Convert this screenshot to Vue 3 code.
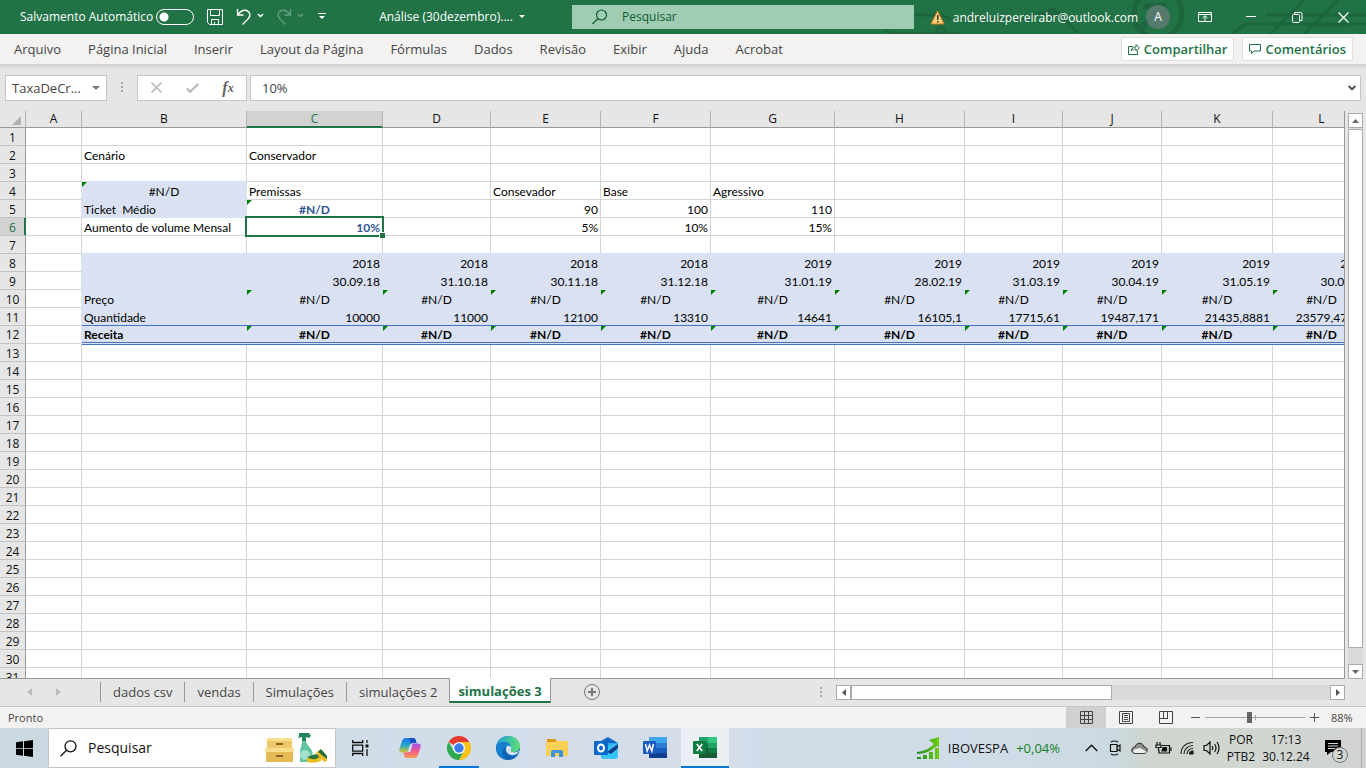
<script setup>
import { ref } from 'vue'

const menus = ['Arquivo', 'Página Inicial', 'Inserir', 'Layout da Página', 'Fórmulas', 'Dados', 'Revisão', 'Exibir', 'Ajuda', 'Acrobat']
const sheets = ['dados csv', 'vendas', 'Simulações', 'simulações 2', 'simulações 3']
const activeSheet = ref('simulações 3')
const formula = ref('10%')
const autosave = ref(false)
const zoom = ref(44)

const columns = [
  { id: 'A', w: 56 }, { id: 'B', w: 165 }, { id: 'C', w: 136 }, { id: 'D', w: 108 },
  { id: 'E', w: 110 }, { id: 'F', w: 110 }, { id: 'G', w: 124 }, { id: 'H', w: 130 },
  { id: 'I', w: 98 }, { id: 'J', w: 99 }, { id: 'K', w: 111 }, { id: 'L', w: 98 }
]
const months = 'CDEFGHIJKL'.split('')
const series = {
  8: ['2018', '2018', '2018', '2018', '2019', '2019', '2019', '2019', '2019', '2019'],
  9: ['30.09.18', '31.10.18', '30.11.18', '31.12.18', '31.01.19', '28.02.19', '31.03.19', '30.04.19', '31.05.19', '30.06.19'],
  10: Array(10).fill('#N/D'),
  11: ['10000', '11000', '12100', '13310', '14641', '16105,1', '17715,61', '19487,171', '21435,8881', '23579,47691'],
  12: Array(10).fill('#N/D')
}
const values = {
  B2: 'Cenário', C2: 'Conservador', B4: '#N/D', C4: 'Premissas', E4: 'Consevador', F4: 'Base', G4: 'Agressivo',
  B5: 'Ticket  Médio', C5: '#N/D', E5: '90', F5: '100', G5: '110',
  B6: 'Aumento de volume Mensal', C6: '10%', E6: '5%', F6: '10%', G6: '15%',
  B10: 'Preço', B11: 'Quantidade', B12: 'Receita'
}
for (const row in series) months.forEach((c, i) => { values[c + row] = series[row][i] })

const filled = (c, r) => (c === 'B' && (r === 4 || r === 5)) || (c >= 'B' && c <= 'L' && r >= 8 && r <= 12)
const nextCol = c => String.fromCharCode(c.charCodeAt(0) + 1)

function cellClass(c, r) {
  const v = values[c + r] || ''
  return {
    fill: filled(c, r),
    'fill-right': filled(c, r) || filled(nextCol(c), r),
    'fill-below': filled(c, r) || filled(c, r + 1),
    err: v === '#N/D',
    num: /^\d/.test(v),
    input: c === 'C' && (r === 5 || r === 6),
    selected: c === 'C' && r === 6,
    line: c !== 'A' && r === 11,
    total: c !== 'A' && r === 12,
    after: c !== 'A' && r === 13
  }
}
</script>

<template>
  <div class="window">
    <header class="title">
      <svg class="circuit" viewBox="0 0 520 34" width="520" height="34" fill="none" stroke="#1c6139" stroke-width="4" aria-hidden="true">
        <circle cx="312" cy="14" r="24" stroke-width="5" />
        <path d="M297 6h20v20M317 6l-22 22" stroke-width="6" />
        <path d="M68 15h28l8 4h80l8-6h20l20 20M116 34h-70l-6-3M502 25h-40M520 24h-120l-14 10M458 34l34-34M424 34l34-34M420 15h100" stroke-width="3" />
        <circle cx="206" cy="13" r="4" stroke-width="3" />
        <circle cx="95" cy="31" r="4" stroke-width="3" />
      </svg>
      <label class="autosave">Salvamento Automático
        <input v-model="autosave" type="checkbox" />
      </label>
      <div class="quick">
        <button aria-label="Salvar"><svg width="18" height="18" viewBox="0 0 18 18" fill="none" stroke="#fff"><path d="M1.500 1.500h15v15h-13l-2-2zM4.500 1.500v6h9v-6M5.500 16.500v-5h7v5M8.500 16v-2" /></svg></button>
        <button aria-label="Desfazer"><svg width="28" height="18" viewBox="0 0 28 18" fill="none" stroke="#fff"><path d="M1.500 1v6h6M1.500 7c3-4 6-5.500 9-4.500 4 1.500 4.500 5.500 1.500 8.500l-5.500 5.500" stroke-width="1.400" /><path d="M22 6l2.500 2.500L27 6" stroke-width="1.400" /></svg></button>
        <button aria-label="Refazer" class="dim"><svg width="28" height="18" viewBox="0 0 28 18" fill="none" stroke="#fff"><path d="M14.500 1v6h-6M14.500 7c-3-4-6-5.500-9-4.500-4 1.500-4.500 5.500-1.500 8.500l5.500 5.500" stroke-width="1.400" /><path d="M22 6l2.500 2.500L27 6" stroke-width="1.400" /></svg></button>
        <button aria-label="Personalizar"><svg width="8" height="8" viewBox="0 0 8 8" fill="#fff"><path d="M0 0h8v1H0zM1 3h6L4 6z" /></svg></button>
      </div>
      <button class="doc">Análise (30dezembro)....<svg width="7" height="4" viewBox="0 0 7 4" fill="#fff"><path d="M0 0h6L3 3z" /></svg></button>
      <div class="search">
        <svg width="16" height="16" viewBox="0 0 16 16" fill="none" stroke="#0f5b30" stroke-width="1.200"><circle cx="9.500" cy="6" r="5" /><path d="M6 9.500L.5 15" /></svg>
        <input type="text" placeholder="Pesquisar" aria-label="Pesquisar" />
      </div>
      <div class="account">
        <svg width="15" height="15" viewBox="0 0 15 15"><path d="M7.500 1L14 14H1z" fill="#fbd27a" stroke="#d9741c" /><path d="M7 5h1.500v5H7zM7 11h1.500v1.500H7z" fill="#333" /></svg>
        <span class="mail">andreluizpereirabr@outlook.com</span>
        <b class="avatar">A</b>
      </div>
      <div class="winbtns">
        <button aria-label="Opções da faixa"><svg width="14" height="12" viewBox="0 0 14 12" fill="none" stroke="#fff"><path d="M.5 1.500h13v9H.5zM.5 3.500h13M7 10V5M4.500 7L7 4.700 9.500 7" /></svg></button>
        <button aria-label="Minimizar"><svg width="10" height="12" viewBox="0 0 10 12" stroke="#fff"><path d="M0 5.500h10" /></svg></button>
        <button aria-label="Restaurar"><svg width="11" height="11" viewBox="0 0 11 11" fill="none" stroke="#fff"><rect x=".5" y="2.500" width="7" height="8" rx="1" /><path d="M2.500 2V.5h6q1.500 0 1.500 1.500v6.500H8" /></svg></button>
        <button aria-label="Fechar"><svg width="11" height="11" viewBox="0 0 11 11" stroke="#fff" stroke-width="1.200"><path d="M.5.5l10 10M10.500.5l-10 10" /></svg></button>
      </div>
    </header>

    <nav class="ribbon">
      <button v-for="m in menus" :key="m" class="menu">{{ m }}</button>
      <span class="grow"></span>
      <button class="action"><svg width="12" height="12" viewBox="0 0 12 12" fill="none" stroke="#217346"><path d="M5 3.500H.5v8h9V8M3 8c.5-3 2.500-4 5-4V1.500l3.500 3.500L8 8V6C6 6 4.500 6.500 3 8z" /></svg>Compartilhar</button>
      <button class="action"><svg width="12" height="12" viewBox="0 0 12 12" fill="none" stroke="#217346"><path d="M.5 1.500h11v6.500H5L2.500 10.500V8h-2z" /></svg>Comentários</button>
    </nav>

    <div class="formula">
      <button class="namebox"><span>TaxaDeCr...</span><svg width="8" height="4" viewBox="0 0 8 4" fill="#777"><path d="M0 0h8L4 4z" /></svg></button>
      <svg class="grip" width="3" height="11" viewBox="0 0 3 11" fill="#a6a6a6"><path d="M0 0h2v2H0zM0 4h2v2H0zM0 8h2v2H0z" /></svg>
      <div class="fxbox">
        <button aria-label="Cancelar"><svg width="11" height="11" viewBox="0 0 11 11" stroke="#bdbdbd" stroke-width="1.600"><path d="M.5.5l10 10M10.500.5l-10 10" /></svg></button>
        <button aria-label="Inserir"><svg width="13" height="10" viewBox="0 0 13 10" fill="none" stroke="#bdbdbd" stroke-width="2.200"><path d="M.8 5.500l3.400 3.300L12.300.8" /></svg></button>
        <button aria-label="Inserir função" class="fx">f<sub>x</sub></button>
      </div>
      <div class="entry">
        <input v-model="formula" type="text" aria-label="Barra de fórmulas" />
        <svg width="8" height="6" viewBox="0 0 8 6" fill="none" stroke="#555" stroke-width="2"><path d="M.7 1L4 4.300 7.300 1" /></svg>
      </div>
    </div>

    <main class="work">
      <div class="grid">
        <table>
          <colgroup>
            <col class="rowcol" />
            <col v-for="c in columns" :key="c.id" :style="{ width: c.w + 'px' }" />
          </colgroup>
          <thead>
            <tr>
              <th class="corner"><svg width="9" height="9" viewBox="0 0 9 9" fill="#b3b3b3"><path d="M9 0v9H0z" /></svg></th>
              <th v-for="c in columns" :key="c.id" scope="col" :class="{ on: c.id === 'C' }">{{ c.id }}</th>
            </tr>
          </thead>
          <tbody>
            <tr v-for="r in 31" :key="r">
              <th scope="row" :class="{ on: r === 6, raised: r === 12 }">{{ r }}</th>
              <td v-for="c in columns" :key="c.id" :class="cellClass(c.id, r)">{{ values[c.id + r] }}<i v-if="c.id === 'C' && r === 6" class="cursor"></i></td>
            </tr>
          </tbody>
        </table>
      </div>
      <div class="vscroll">
        <button aria-label="Rolar para cima"><svg width="7" height="4" viewBox="0 0 7 4" fill="#666"><path d="M0 4h7L3.500 0z" /></svg></button>
        <div class="thumb"></div>
        <div class="track"></div>
        <button aria-label="Rolar para baixo"><svg width="7" height="4" viewBox="0 0 7 4" fill="#666"><path d="M0 0h7L3.500 4z" /></svg></button>
      </div>
    </main>

    <div class="sheets">
      <div class="arrows">
        <button aria-label="Planilha anterior"><svg width="5" height="8" viewBox="0 0 5 8" fill="#bdbdbd"><path d="M5 0v8L0 4z" /></svg></button>
        <button aria-label="Próxima planilha"><svg width="5" height="8" viewBox="0 0 5 8" fill="#bdbdbd"><path d="M0 0v8l5-4z" /></svg></button>
      </div>
      <button v-for="s in sheets" :key="s" class="sheet" :class="{ active: s === activeSheet }" @click="activeSheet = s">{{ s }}</button>
      <button class="add" aria-label="Nova planilha"><svg width="16" height="16" viewBox="0 0 16 16" fill="none" stroke="#777"><circle cx="8" cy="8" r="7.500" /><path d="M8 4v8M4 8h8" stroke-width="2" /></svg></button>
      <span class="grow"></span>
      <svg class="grip" width="3" height="11" viewBox="0 0 3 11" fill="#a6a6a6"><path d="M0 0h2v2H0zM0 4h2v2H0zM0 8h2v2H0z" /></svg>
      <div class="hscroll">
        <button aria-label="Rolar para a esquerda"><svg width="4" height="7" viewBox="0 0 4 7" fill="#555"><path d="M4 0v7L0 3.500z" /></svg></button>
        <div class="thumb"></div>
        <div class="track"></div>
        <button aria-label="Rolar para a direita"><svg width="4" height="7" viewBox="0 0 4 7" fill="#555"><path d="M0 0v7l4-3.500z" /></svg></button>
      </div>
    </div>

    <footer class="status">
      <span>Pronto</span>
      <span class="grow"></span>
      <button class="view on" aria-label="Normal"><svg width="13" height="13" viewBox="0 0 13 13" fill="none" stroke="#444"><path d="M.5.5h12v12H.5zM4.500 0v13M8.500 0v13M0 4.500h13M0 8.500h13" /></svg></button>
      <button class="view" aria-label="Layout da Página"><svg width="14" height="13" viewBox="0 0 14 13" fill="none" stroke="#444"><path d="M.5.5h13v12H.5zM3.500 2.500h7v8h-7zM5 4.500h4M5 6.500h4M5 8.500h4" /></svg></button>
      <button class="view" aria-label="Quebra de página"><svg width="14" height="13" viewBox="0 0 14 13" fill="none" stroke="#444"><path d="M.5.5h13v12H.5zM4.500 0v7.500M8.500 0v7.500M0 7.500h9" /></svg></button>
      <button class="step" aria-label="Reduzir"><svg width="9" height="9" viewBox="0 0 9 9" stroke="#555"><path d="M0 4.500h9" /></svg></button>
      <div class="zoom"><input v-model="zoom" type="range" min="0" max="100" aria-label="Zoom" /></div>
      <button class="step" aria-label="Ampliar"><svg width="9" height="9" viewBox="0 0 9 9" stroke="#555"><path d="M0 4.500h9M4.500 0v9" /></svg></button>
      <span class="pct">88%</span>
    </footer>

    <div class="taskbar">
      <button class="start" aria-label="Iniciar"><svg width="17" height="17" viewBox="0 0 17 17" fill="#000"><path d="M0 2.300l7-1v6.900H0zM8 1.200L17 0v8.200H8zM0 9h7v6.800l-7-1zM8 9h9v8l-9-1.200z" /></svg></button>
      <div class="tsearch">
        <svg width="17" height="17" viewBox="0 0 17 17" fill="none" stroke="#111" stroke-width="1.300"><circle cx="10.500" cy="6.300" r="5.500" /><path d="M6.500 10.300L.5 16.300" /></svg>
        <input type="text" placeholder="Pesquisar" aria-label="Pesquisar no Windows" />
        <svg width="64" height="32" viewBox="0 0 64 32">
          <rect x="3" y="7" width="25" height="11" rx="1" fill="#edc868" /><rect x="3" y="6" width="25" height="3" fill="#f8dd8d" />
          <rect x="2" y="18" width="27" height="12" rx="1" fill="#e5ba55" /><rect x="1" y="16" width="29" height="4" rx="1" fill="#f8dd8d" />
          <rect x="12" y="11" width="7" height="2" fill="#8c6327" /><rect x="12" y="23" width="7" height="2" fill="#8c6327" />
          <path d="M35 1h10l2 3-2 2-3-1v4h-4V5l-4 1 1-2z" fill="#25865b" />
          <path d="M38 9h4c0 4 7 7 7 15v5q0 1-1 1H37q-1 0-1-1v-8c0-5 2-7 2-12z" fill="#62c5a0" /><circle cx="41" cy="23" r="5" fill="#a2e2cc" />
          <path d="M43 26l9-3 5 2v4q-7 3-14 1z" fill="#efbb23" /><path d="M43 25l9-3 5 2-5 3q-5 1-9-2z" fill="#2b7838" />
          <path d="M52 21l3-3 8 8v3l-3 1z" fill="#efbb23" /><path d="M54 20l3-3 6 7v3z" fill="#216f38" />
        </svg>
      </div>
      <div class="apps">
        <button aria-label="Visão de tarefas"><svg width="17" height="16" viewBox="0 0 17 16" fill="none" stroke="#111" stroke-width="1.300"><path d="M.7 0v2.500h10V0M.7 5.200h10v6H.7zM.7 16v-2.500h10V16M15 0v3M15 9v7" /><path d="M13.500 4.500h3v3h-3z" fill="#111" stroke="none" /></svg></button>
        <button aria-label="Copilot"><svg width="24" height="24" viewBox="0 0 24 24">
          <defs>
            <linearGradient id="cpA" x1="0" y1="0" x2="0" y2="1"><stop offset="0" stop-color="#1b72e8" /><stop offset=".5" stop-color="#25a7c9" /><stop offset="1" stop-color="#d9c52a" /></linearGradient>
            <linearGradient id="cpB" x1="0" y1="0" x2="0" y2="1"><stop offset="0" stop-color="#a64ff0" /><stop offset=".5" stop-color="#ef5a8e" /><stop offset="1" stop-color="#fb9a52" /></linearGradient>
          </defs>
          <path d="M8 2h7c2 0 2.500 1 3 3l.5 2H15c-2 0-2.500 1-3 3l-1 4c-.7 2-1.500 2.500-3 2.500H4c-2.500 0-3-2-2.500-4L4 5c.7-2 2-3 4-3z" fill="url(#cpA)" />
          <path d="M16 22H9c-2 0-2.500-1-3-3l-.5-2.500H9c2 0 2.500-1 3-2.500l1-4c.7-2 1.500-2.500 3-2.500h4c2.500 0 3 2 2.500 4L20 19c-.7 2-2 3-4 3z" fill="url(#cpB)" />
          <path d="M11 2h4c2 0 2.500 1 3 3l.5 2H15c-1 0-1.600.3-2 1z" fill="#1552c4" />
          <path d="M12 8.500h2.500l-2.300 7.500h-2.700z" fill="#d4dfeb" />
        </svg></button>
        <button aria-label="Chrome" class="open"><svg width="24" height="24" viewBox="0 0 24 24">
          <path d="M12 12L1.600 6A12 12 0 0 1 22.400 6z" fill="#e33b2e" /><path d="M12 12V6h10.400A12 12 0 0 1 12 24l5-9z" fill="#fbc116" /><path d="M12 12l5 3-5 9A12 12 0 0 1 1.600 6l5.200 9z" fill="#2da94f" />
          <circle cx="12" cy="12" r="6" fill="#fff" /><circle cx="12" cy="12" r="4.700" fill="#3b7ded" />
        </svg></button>
        <button aria-label="Edge"><svg width="24" height="24" viewBox="0 0 24 24">
          <defs>
            <linearGradient id="egA" x1="0" y1="0" x2="1" y2="0"><stop offset="0" stop-color="#1c9de0" /><stop offset="1" stop-color="#5fe070" /></linearGradient>
          </defs>
          <circle cx="12" cy="12" r="12" fill="#0f62b4" />
          <path d="M0 11C1 4 6 0 12 0c7 0 12 5 12 10 0 4-3 6-6 6-4 0-4-2-3.500-3C15.500 9 12 6 8 6c-4 0-7 2-8 5z" fill="url(#egA)" />
          <path d="M0 11c2-5 9-6 13-3 2 1.500 2 4 1 5.500-.5 1 0 3 4 3l5-2-2 4c-2 1-4 1.500-6 1-4-.5-6.500-4-5-9-5 2-5 10 1 13.300C5 23 0 19 0 11z" fill="#167fce" />
          <path d="M11 10c-2 3-1 8 4 9 2 .5 4 0 6-1l2.500-3.500C25 13 24 17 22 19l2-5c-2 2-4 2.500-6.500 2.300-3-.5-3-2-2.500-3.300 1-2-1-4-4-3z" fill="#d4e1ec" />
        </svg></button>
        <button aria-label="Explorador"><svg width="24" height="24" viewBox="0 0 24 24">
          <path d="M2 3h8l2 2v3H2z" fill="#dc9a07" /><path d="M2 6h8l2-1h10q1 0 1 1v14H1V7z" fill="#fccf55" /><path d="M6 21v-5q0-2 2-2h8q2 0 2 2v5h-4v-4h-4v4z" fill="#3a93dc" />
        </svg></button>
        <button aria-label="Outlook"><svg width="26" height="24" viewBox="0 0 26 24">
          <path d="M6 6l9-5 10 6v11H6z" fill="#1269c7" /><path d="M7 7h14v9H7z" fill="#29b2ef" /><path d="M8 14l17-8v14q0 3-3 3H10q-2 0-2-2z" fill="#38c4f2" /><path d="M14 16l11-8v4l-7 6z" fill="#103d87" />
          <rect x="1" y="5" width="14" height="14" rx="1" fill="#0869c9" /><ellipse cx="8" cy="12" rx="3" ry="3.500" fill="none" stroke="#fff" stroke-width="2" />
        </svg></button>
        <button aria-label="Word"><svg width="24" height="22" viewBox="0 0 24 22">
          <path d="M6 0h18v6H6z" fill="#41a5ee" /><path d="M6 6h18v5H6z" fill="#2b7cd3" /><path d="M6 11h18v5H6z" fill="#185abd" /><path d="M6 16h18v5H6z" fill="#103f91" /><rect y="4" width="13" height="13" rx="1" fill="#185abd" />
          <path d="M2.500 7l1.700 7L6.500 8l2.300 6L10.500 7" fill="none" stroke="#fff" stroke-width="1.500" />
        </svg></button>
        <button aria-label="Excel" class="current"><svg width="24" height="22" viewBox="0 0 24 22">
          <path d="M6 0h9v6H6z" fill="#21a366" /><path d="M15 0h9v6h-9z" fill="#33c481" /><path d="M6 6h9v5H6z" fill="#107c41" /><path d="M15 6h9v5h-9z" fill="#21a366" /><path d="M6 11h18v10H6z" fill="#185c37" /><path d="M15 11h9v5h-9z" fill="#107c41" /><rect y="4" width="13" height="13" rx="1" fill="#107c41" />
          <path d="M3.800 7l5.400 7M9.200 7l-5.400 7" stroke="#fff" stroke-width="1.700" />
        </svg></button>
      </div>
      <span class="grow"></span>
      <button class="stock">
        <svg width="24" height="24" viewBox="0 0 24 24"><defs><linearGradient id="stk" x1="0" y1="0" x2="1" y2="0"><stop offset="0" stop-color="#1c8a2f" /><stop offset="1" stop-color="#6fce0d" /></linearGradient></defs>
          <path d="M1 16c8-1 13-4 17-8l-5-4 10-3v10l-2-1c-6 5-12 8-20 8zM1 21h4v2H1zM7 19h4v4H7zM13 16h4v7h-4zM19 12h4v11h-4z" fill="url(#stk)" /></svg>
        <span>IBOVESPA</span><span class="up">+0,04%</span>
      </button>
      <div class="tray">
        <button aria-label="Mostrar ícones ocultos"><svg width="13" height="8" viewBox="0 0 13 8" fill="none" stroke="#111" stroke-width="1.400"><path d="M.7 7L6.500 1.200 12.300 7" /></svg></button>
        <button aria-label="Câmera"><svg width="12" height="16" viewBox="0 0 12 16" fill="none" stroke="#111" stroke-width="1.200"><path d="M1.500 4.500h6.500v7H1.500zM8 7l3-2v6L8 9M2 2q3-2 7 0M2 14q3 2 7 0" /></svg></button>
        <button aria-label="OneDrive"><svg width="17" height="12" viewBox="0 0 17 12"><path d="M4 11.300C-.5 11 0 5 4 5c1-5 8-5 9 0 4 0 4.500 6 0 6.300z" fill="#8f8f8f" stroke="#222" /><path d="M4 11C1 9.500 2 7.500 5 7l4-1 7 4-3 1z" fill="#eee" /></svg></button>
        <button aria-label="Bateria"><svg width="17" height="13" viewBox="0 0 17 13" fill="none" stroke="#111" stroke-width="1.200"><path d="M7 3.500h7.500v7.500H4V8M16 5.500v3.500M2 0v3M5 0v3M1 3h5v2.500H1zM3.500 5v4" /><path d="M8 5.500h3.500v3.500H7z" fill="#111" /></svg></button>
        <button aria-label="Rede"><svg width="14" height="14" viewBox="0 0 14 14" fill="none" stroke="#222" stroke-width="1.200"><path d="M1 13C1 6 6 1.500 13 1.500M4 13c0-5 4-8.500 9-8.500M7 13c0-3 2.500-5.500 6-5.500" /><path d="M9.500 13c0-1.500 1-3 3.500-3v3z" fill="#111" /></svg></button>
        <button aria-label="Volume"><svg width="17" height="14" viewBox="0 0 17 14" fill="none" stroke="#111" stroke-width="1.200"><path d="M1 4.500h2.500L7 1v12L3.500 9.500H1zM9 5q1.500 2 0 4M11.500 3q3 4 0 8M14 1q4 6 0 12" /></svg></button>
      </div>
      <button class="lang"><span>POR</span><span>PTB2</span></button>
      <button class="clock"><span>17:13</span><span>30.12.24</span></button>
      <button class="note" aria-label="Notificações"><svg width="16" height="16" viewBox="0 0 16 16"><path d="M0 0h16v12H6l-4 3v-3H0z" /><path d="M3 3.500h10M3 6h10M3 8.500h7" stroke="#d3d7d2" /></svg><b>3</b></button>
      <span class="edge"></span>
    </div>
  </div>
</template>

<style>
body { overflow: hidden; }
</style>

<style scoped>
.window { display: flex; flex-direction: column; height: 100vh; background: #e6e6e6; color: #444; font: 12px/16px "Open Sans", "Noto Sans", sans-serif; }
button, input { font: inherit; color: inherit; border: 0; background: none; padding: 0; margin: 0; outline: 0; }
button { display: flex; align-items: center; justify-content: center; white-space: nowrap; }
svg { flex: none; }
.grow { flex: 1; }

.title { position: relative; display: flex; align-items: center; height: 34px; flex: none; background: #217346; color: #fff; overflow: hidden; }
.title > * { position: relative; }
.title .circuit { position: absolute; right: 0; top: 0; width: 520px; opacity: .75; }
.autosave { display: flex; align-items: center; gap: 3px; width: 174px; margin-left: 20px; white-space: nowrap; }
.autosave input { appearance: none; flex: none; width: 38px; height: 16px; box-sizing: border-box; border: 1px solid #fff; border-radius: 8px; background: radial-gradient(circle at 7px 7px, #fff 4px, transparent 5px); }
.quick { display: flex; align-items: center; gap: 12px; margin-left: 12px; }
.quick .dim { opacity: .3; }
.quick button:last-child { margin-left: 2px; }
.doc { gap: 6px; width: 143px; margin-left: 55px; }
.search { display: flex; align-items: center; flex: 0 1 342px; height: 24px; margin-left: 48px; padding-left: 20px; box-sizing: border-box; gap: 14px; background: #9fcdb3; color: #0f5b30; }
.search input { flex: 1; min-width: 0; }
input::placeholder { color: inherit; opacity: 1; }
.account { display: flex; align-items: center; gap: 8px; margin-left: auto; }
.mail { padding-top: 1px; }
.avatar { width: 24px; height: 24px; line-height: 24px; border-radius: 50%; background: #56796d; text-align: center; font-weight: 400; }
.winbtns { display: flex; margin-left: 12px; }
.winbtns button { width: 46px; height: 30px; }

.ribbon { display: flex; align-items: center; flex: none; height: 30px; padding-left: 1px; background: #f3f2f1; font-size: 13px; }
.menu { padding: 0 14px 0 13px; height: 30px; }
.action { height: 24px; padding: 0 6px; gap: 4px; margin-right: 8px; box-sizing: border-box; border: 1px solid #e1dfdd; border-radius: 2px; background: #fff; color: #217346; font-weight: 600; }
.action:last-child { margin-right: 13px; }

.formula { display: flex; align-items: center; flex: none; height: 47px; padding: 0 5px; background: linear-gradient(#cfcfcf, #e6e6e6 6px); font-size: 13px; }
.namebox, .fxbox, .entry { display: flex; align-items: center; height: 26px; box-sizing: border-box; border: 1px solid #c6c6c6; background: #fff; }
.namebox { width: 102px; justify-content: space-between; padding: 0 6px; }
.grip { margin: 0 13px 0 14px; }
.fxbox { width: 110px; margin-right: 3px; }
.fxbox button { flex: 1; height: 24px; }
.fx { font: italic 700 16px/20px "Liberation Serif", serif; color: #666; }
.fx sub { font-size: 12px; line-height: 12px; }
.entry { flex: 1; padding: 0 4px 0 11px; }
.entry input { flex: 1; }

.work { display: flex; flex: 1; min-height: 0; }
.grid { flex: 1; min-width: 0; overflow: hidden; background: #fff; border-right: 1px solid #999; border-bottom: 1px solid #999; }
table { width: 1371px; table-layout: fixed; border-collapse: separate; border-spacing: 0; }
.rowcol { width: 26px; }
th, td { box-sizing: border-box; height: 18px; padding: 2px 0 0; line-height: 15px; white-space: pre; overflow: hidden; }
th { font-weight: 400; color: #111; background: #e6e6e6; border-right: 1px solid #999; border-bottom: 1px solid #c4c4c4; }
thead th { height: 17px; padding: 0; line-height: 16px; border-right-color: #b4b4b4; border-bottom-color: #999; }
.corner { text-align: right; padding-right: 4px; vertical-align: bottom; line-height: 10px; }
.corner svg { display: inline-block; vertical-align: bottom; margin-bottom: 2px; }
th.on { background: #d2d2d2; color: #217346; box-shadow: inset -1px 0 #217346; border-right-color: #217346; }
thead th.on { box-shadow: inset 0 -1px #217346; border-right-color: #b4b4b4; border-bottom-color: #217346; }
td { position: relative; padding: 2px 2px 0; font-family: Lato, "Open Sans", sans-serif; font-size: 12px; color: #000; border-right: 1px solid #d4d4d4; border-bottom: 1px solid #d4d4d4; }
.fill { background: #d9e1f2; }
.fill-right { border-right-color: #d9e1f2; }
.fill-below { border-bottom-color: #d9e1f2; }
.num { text-align: right; }
.err { text-align: center; }
.err::before { content: ""; position: absolute; left: 0; top: 0; width: 5px; height: 5px; background: #008000; clip-path: polygon(0 0, 100% 0, 0 100%); }
.input { color: #305496; font-weight: 700; }
.selected { overflow: visible; }
.cursor { position: absolute; inset: -2px; border: 2px solid #217346; z-index: 1; }
.cursor::after { content: ""; position: absolute; right: -3px; bottom: -3px; width: 5px; height: 5px; background: #217346; border: solid #fff; border-width: 1px 0 0 1px; }
.raised, .total { padding-top: 0; line-height: 17px; }
.total { font-weight: 700; }
/* Rules are painted under transparent borders so they run unbroken across columns. */
.line, .total, .after { background-origin: border-box; background-repeat: no-repeat; border-color: transparent; }
.line { background-image: linear-gradient(#4472c4, #4472c4); background-size: 100% 1px; background-position: 0 17px; }
.total { background-image: linear-gradient(#4472c4, #4472c4); background-size: 100% 1px; background-position: 0 16px; }
.after { background-image: linear-gradient(#4472c4, #4472c4), linear-gradient(#d4d4d4, #d4d4d4), linear-gradient(#d4d4d4, #d4d4d4); background-size: 100% 1px, 100% 1px, 1px 100%; background-position: 0 0, 0 100%, 100% 0; }

.vscroll { display: flex; flex-direction: column; width: 15px; flex: none; margin: 2px 3px 0 3px; background: #dadada; }
.vscroll button, .hscroll button { width: 15px; height: 15px; box-sizing: border-box; border: 1px solid #ababab; background: #fff; flex: none; }
.thumb { box-sizing: border-box; border: 1px solid #ababab; background: #fff; }
.vscroll .thumb { flex: 97; margin-top: 1px; }
.vscroll .track { flex: 3; }

.sheets { display: flex; align-items: center; flex: none; height: 28px; box-sizing: border-box; padding-bottom: 1px; border-bottom: 1px solid #c6c6c6; font-size: 13px; }
.arrows { display: flex; gap: 24px; width: 73px; padding-left: 27px; }
.sheet { height: 20px; padding: 0 12px 1px 12px; box-sizing: border-box; border-left: 1px solid #999; }
.sheet.active { align-self: flex-start; height: 25px; margin-top: -1px; padding: 2px 8px 0; background: #fff; border-left: 1px solid #999; border-right: 1px solid #999; border-bottom: 2px solid #217346; color: #217346; font-weight: 700; z-index: 1; }
.add { margin-left: 33px; }
.hscroll { display: flex; flex: 0 1 509px; height: 15px; margin-right: 21px; background: #dadada; }
.hscroll .thumb { flex: 260; }
.hscroll .track { flex: 219; }

.status { display: flex; align-items: center; flex: none; height: 21px; padding-left: 8px; background: #f3f2f1; font-size: 11px; }
.view { width: 40px; height: 21px; }
.view.on { background: #d2d0ce; }
.step { width: 19px; height: 21px; }
.zoom { width: 100px; height: 21px; display: flex; align-items: center; background: linear-gradient(#a6a6a6, #a6a6a6) 50px 8px / 1px 5px no-repeat; }
.zoom input { appearance: none; width: 100%; height: 1px; background: #a6a6a6; }
.zoom input::-webkit-slider-thumb { appearance: none; width: 5px; height: 11px; background: #666; }
.pct { width: 42px; padding-left: 7px; box-sizing: border-box; }

.taskbar { display: flex; align-items: stretch; flex: none; height: 40px; color: #111; background: linear-gradient(90deg, #cad8df, #d0dde9 25%, #d5dcea 45%, #cfdce8 75%, #cbd9e3 81%, #ced6cf 84%, #d2d6d1 92%, #d0d3d0); }
.start { width: 48px; }
.tsearch { display: flex; align-items: center; width: 288px; box-sizing: border-box; padding: 0 7px 0 11px; gap: 11px; border: 1px solid #c2c6ca; background: #fff; font-size: 14px; }
.tsearch input { flex: 1; min-width: 0; }
.apps { display: flex; }
.apps button { width: 49px; box-sizing: border-box; }
.open { background: linear-gradient(#0078d7, #0078d7) center bottom / 40px 2px no-repeat; }
.apps .current { width: 48px; margin-left: 2px; background: #ebf0f5; border-bottom: 2px solid #0078d7; padding-top: 2px; }
.stock { gap: 8px; margin-right: 19px; font-size: 13px; }
.up { color: #12801a; }
.tray { display: flex; }
.tray button { width: 24px; }
.lang, .clock { flex-direction: column; width: 36px; line-height: 17px; font-size: 12px; }
.clock { width: 54px; }
.note { position: relative; width: 48px; padding-right: 8px; box-sizing: border-box; }
.note b { position: absolute; left: 19px; top: 19px; width: 14px; height: 14px; border: 1px solid #777; border-radius: 50%; background: #d3d7d2; font: 12px/14px "Open Sans", sans-serif; }
.edge { width: 4px; border-left: 1px solid #aaa; }
</style>
